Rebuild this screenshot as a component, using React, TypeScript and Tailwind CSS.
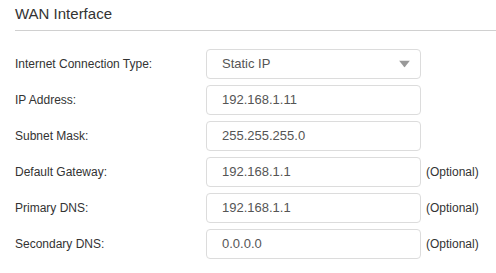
const rows = [
  { label: 'Internet Connection Type:', value: 'Static IP', select: true },
  { label: 'IP Address:', value: '192.168.1.11' },
  { label: 'Subnet Mask:', value: '255.255.255.0' },
  { label: 'Default Gateway:', value: '192.168.1.1', optional: true },
  { label: 'Primary DNS:', value: '192.168.1.1', optional: true },
  { label: 'Secondary DNS:', value: '0.0.0.0', optional: true },
]

export default function App() {
  return (
    <div className="w-[496px] h-[273px] bg-white pl-[15px] font-['Liberation_Sans',Arial,sans-serif] overflow-hidden">
      {/* Section header */}
      <div className="h-[31px] border-b border-[#d0d0d0] pt-[5px]">
        <h2 className="text-[15px] leading-[18px] text-[#333]">WAN Interface</h2>
      </div>

      <div className="mt-[18px] flex flex-col gap-[6px]">
        {rows.map((row) => (
          <div key={row.label} className="flex items-center h-[30px]">
            <label className="w-[191px] text-[12px] text-[#333]">{row.label}</label>
            <div className="relative w-[215px] h-[30px] rounded-[4px] border border-[#dcdcdc] bg-white flex items-center pl-[15px]">
              <span className="text-[13px] text-[#555]">{row.value}</span>
              {row.select && (
                <svg className="absolute right-[10px] top-1/2 -translate-y-1/2" width="11" height="7" viewBox="0 0 11 7">
                  <path d="M0 0 L11 0 L5.5 7 Z" fill="#999" />
                </svg>
              )}
            </div>
            {row.optional && <span className="ml-[5px] text-[12px] text-[#333]">(Optional)</span>}
          </div>
        ))}
      </div>
    </div>
  )
}
